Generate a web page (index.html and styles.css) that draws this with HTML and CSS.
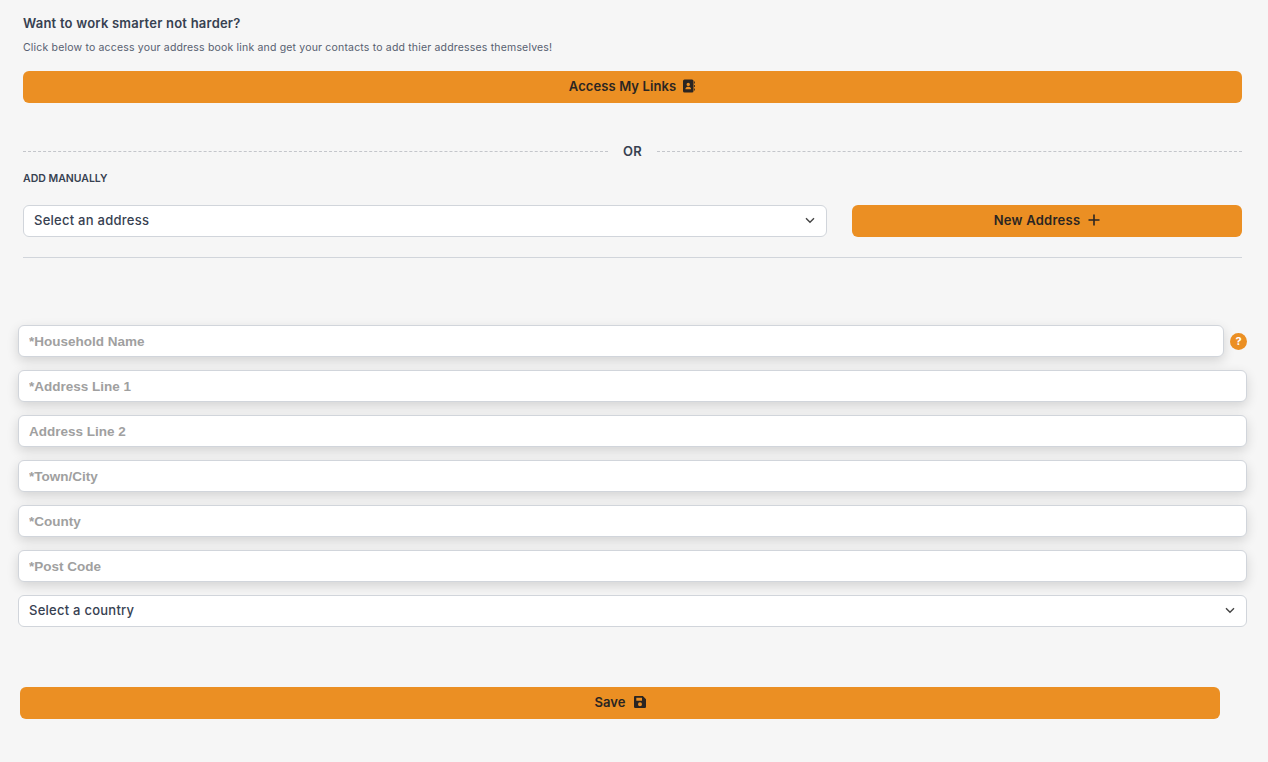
FILE: index.html
```html
<!DOCTYPE html>
<html lang="en">
<head>
<meta charset="utf-8">
<title>Address book</title>
<link rel="stylesheet" href="styles.css">
</head>
<body>
<main class="page">
  <section class="top">
    <h2 class="title">Want to work smarter not harder?</h2>
    <p class="sub">Click below to access your address book link and get your contacts to add thier addresses themselves!</p>
    <button class="btn btn-links" type="button">Access My Links
      <svg class="ico" viewBox="0 0 14 14" width="14" height="14"><path fill="#2a2522" fill-rule="evenodd" d="M1.500.5h7.500A1.500 1.500 0 0 1 10.500 2v10A1.500 1.500 0 0 1 9 13.500H1.500A1.500 1.500 0 0 1 0 12V2A1.500 1.500 0 0 1 1.500.5ZM5.250 3.700a1.700 1.700 0 1 0 0 3.400 1.700 1.700 0 0 0 0-3.400ZM2.400 10.300h5.700c0-1.400-1-2.500-2.300-2.500H4.700c-1.300 0-2.300 1.100-2.300 2.500Z"/><path fill="#2a2522" d="M11.200 2.400h.8v2.200h-.8zM11.200 5.900h.8v2.200h-.8zM11.200 9.400h.8v2.200h-.8z"/></svg>
    </button>
    <div class="or"><span class="or-line"></span><span class="or-text">OR</span><span class="or-line"></span></div>
    <h3 class="manual">ADD MANUALLY</h3>
    <div class="pick-row">
      <div class="select select-address"><span>Select an address</span>
        <svg class="chev" viewBox="0 0 12 12" width="12" height="12"><path d="M2 4.200 6 8.200 10 4.200" fill="none" stroke="#444" stroke-width="1.400"/></svg>
      </div>
      <button class="btn btn-new" type="button">New Address
        <svg class="ico" viewBox="0 0 14 14" width="14" height="14"><path d="M7 1.500v11M1.500 7h11" stroke="#2a2522" stroke-width="1.600" fill="none"/></svg>
      </button>
    </div>
    <hr class="rule">
  </section>
  <form class="form">
    <div class="name-row">
      <input class="field" type="text" placeholder="*Household Name">
      <span class="help">?</span>
    </div>
    <input class="field" type="text" placeholder="*Address Line 1">
    <input class="field" type="text" placeholder="Address Line 2">
    <input class="field" type="text" placeholder="*Town/City">
    <input class="field" type="text" placeholder="*County">
    <input class="field" type="text" placeholder="*Post Code">
    <div class="select select-country"><span>Select a country</span>
      <svg class="chev" viewBox="0 0 12 12" width="12" height="12"><path d="M2 4.200 6 8.200 10 4.200" fill="none" stroke="#444" stroke-width="1.400"/></svg>
    </div>
    <button class="btn btn-save" type="button">Save
      <svg class="ico" viewBox="0 0 14 14" width="14" height="14"><path fill="#2a2522" fill-rule="evenodd" d="M2.500 1h7.300L13 4.200v7.600a1.200 1.200 0 0 1-1.200 1.200H2.200A1.200 1.200 0 0 1 1 11.800V2.200A1.200 1.200 0 0 1 2.500 1ZM3.300 2.800v2.900h5.700V2.800ZM7 7.300a2 2 0 1 0 0 4 2 2 0 0 0 0-4Z"/></svg>
    </button>
  </form>
</main>
</body>
</html>
```

FILE: styles.css
```css
* { box-sizing: border-box; }
html, body { margin: 0; height: 100%; }
body {
  background: #f6f6f6;
  color: #374151;
  font-family: Inter, "Liberation Sans", sans-serif;
  overflow: hidden;
}
.page { height: 762px; }
.top { padding: 15px 26px 0 23px; }
.title {
  margin: 0;
  font-size: 13px;
  line-height: 17px;
  font-weight: 600;
  letter-spacing: .22px;
  color: #374151;
}
.sub {
  margin: 9px 0 0;
  font-size: 10.500px;
  line-height: 14px;
  letter-spacing: .18px;
  color: #566070;
}
.btn {
  display: flex;
  align-items: center;
  justify-content: center;
  gap: 7px;
  height: 32px;
  border: 0;
  border-radius: 6px;
  background: #eb8f23;
  color: #2a2522;
  font-family: inherit;
  font-size: 13px;
  line-height: 16px;
  font-weight: 600;
  letter-spacing: .1px;
  padding: 0 0 2px;
}
.ico { flex: none; }
.btn-links { width: 100%; margin-top: 16px; padding-left: 1px; }
.or {
  display: flex;
  align-items: center;
  gap: 15px;
  margin-top: 40px;
  height: 16px;
}
.or-line { flex: 1; border-top: 1px dashed #c4c6cb; }
.or-text { font-size: 13px; font-weight: 600; letter-spacing: .3px; color: #374151; }
.manual {
  margin: 13px 0 0;
  font-size: 10.500px;
  line-height: 14px;
  font-weight: 600;
  color: #374151;
}
.pick-row {
  display: flex;
  gap: 25px;
  margin-top: 19px;
}
.select {
  display: flex;
  align-items: center;
  justify-content: space-between;
  height: 32px;
  padding: 0 10px 2px;
  background: #fff;
  border: 1px solid #d1d5db;
  border-radius: 6px;
  font-size: 13px;
  line-height: 16px;
  font-weight: 500;
  letter-spacing: .25px;
  color: #374151;
}
.select-address { width: 804px; }
.btn-new { width: 390px; letter-spacing: .25px; padding-left: 1px; }
.rule {
  margin: 20px 0 0;
  border: 0;
  border-top: 1px solid #d1d5db;
}
.form {
  display: flex;
  flex-direction: column;
  gap: 13px;
  padding: 67px 21px 0 18px;
}
.name-row {
  display: flex;
  align-items: center;
  gap: 6px;
}
.name-row .field { flex: 1; width: auto; min-width: 0; }
.field {
  width: 100%;
  height: 32px;
  padding: 0 10px;
  background: #fff;
  border: 1px solid #d1d5db;
  border-radius: 6px;
  box-shadow: 0 4px 12px rgba(0, 0, 0, .14);
  font-family: "Liberation Sans", Arial, sans-serif;
  font-size: 13.500px;
  font-weight: 700;
  color: #374151;
  outline: 0;
}
.field::placeholder { color: #a0a0a0; opacity: 1; }
.help {
  flex: none;
  width: 17px;
  height: 17px;
  border-radius: 50%;
  background: #eb8f23;
  color: #fff;
  font-size: 11px;
  font-weight: 700;
  line-height: 17px;
  text-align: center;
}
.btn-save { width: 1200px; margin: 47px 0 0 2px; padding-left: 1px; }
```
